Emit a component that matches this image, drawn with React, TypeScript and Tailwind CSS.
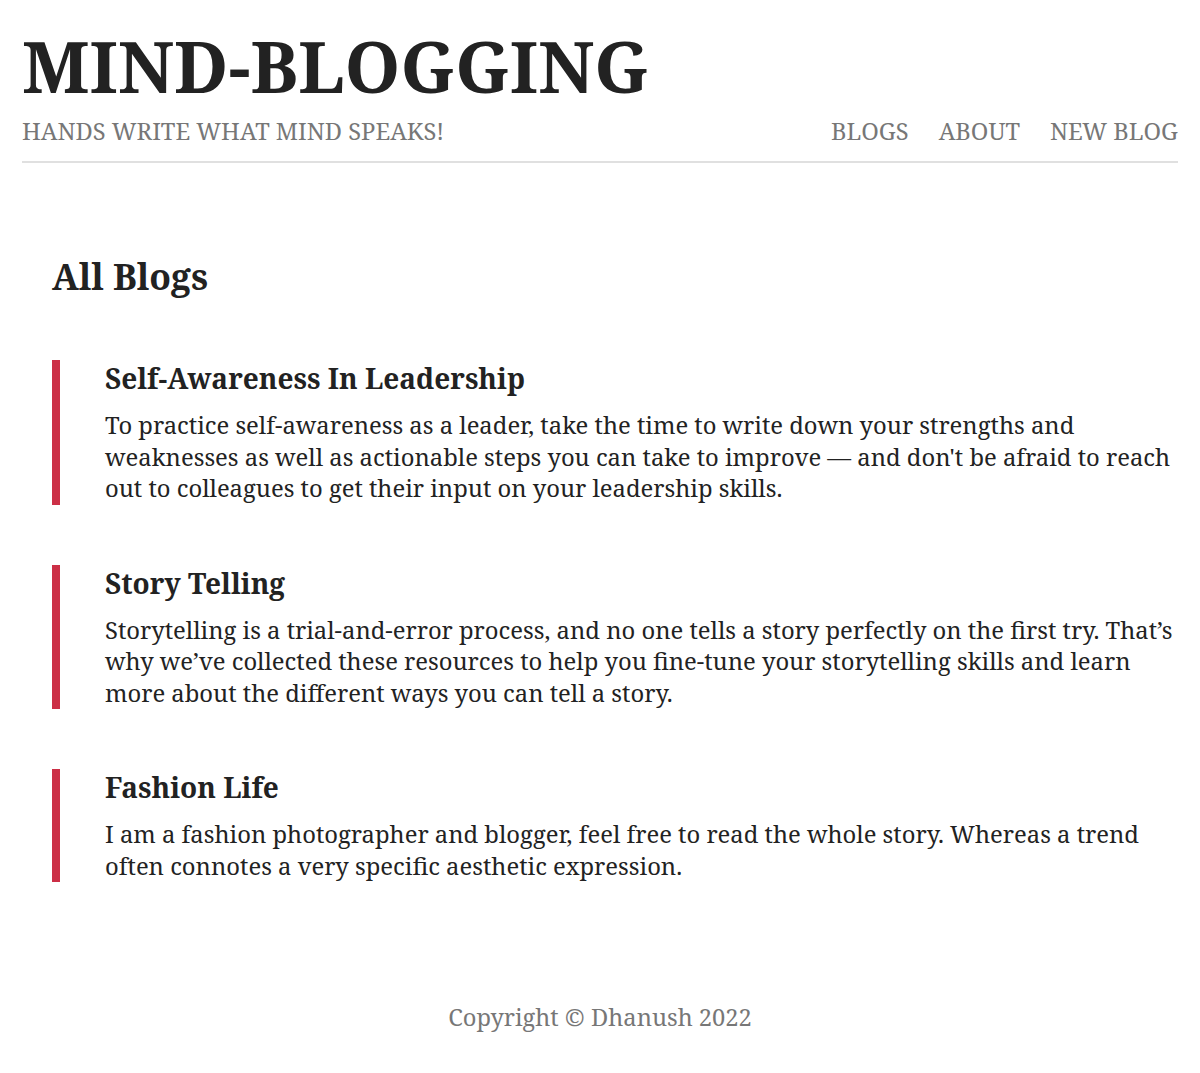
import React from "react";

const blogs = [
  {
    title: "Self-Awareness In Leadership",
    body: "To practice self-awareness as a leader, take the time to write down your strengths and weaknesses as well as actionable steps you can take to improve — and don't be afraid to reach out to colleagues to get their input on your leadership skills.",
  },
  {
    title: "Story Telling",
    body: "Storytelling is a trial-and-error process, and no one tells a story perfectly on the first try. That’s why we’ve collected these resources to help you fine-tune your storytelling skills and learn more about the different ways you can tell a story.",
  },
  {
    title: "Fashion Life",
    body: "I am a fashion photographer and blogger, feel free to read the whole story. Whereas a trend often connotes a very specific aesthetic expression.",
  },
];

export default function App() {
  return (
    <div
      className="min-h-[1073px] bg-white text-[#222]"
      style={{ fontFamily: '"Noto Serif", "DejaVu Serif", serif' }}
    >
      <header className="mx-[22px] border-b-2 border-[#e0e0e0] pt-[26px] pb-[14px]">
        <h1 className="text-[71px] font-bold leading-[80px] text-[#222]">MIND-BLOGGING</h1>
        <div className="mt-[9px] flex items-center justify-between text-[23.7px] leading-[32px] text-[#777]">
          <span>HANDS WRITE WHAT MIND SPEAKS!</span>
          <nav className="flex gap-[30px]">
            <a>BLOGS</a>
            <a>ABOUT</a>
            <a>NEW BLOG</a>
          </nav>
        </div>
      </header>
      <main className="pl-[52px] pr-[22px] pt-[91px]">
        <h2 className="text-[35.5px] font-bold leading-[44px]">All Blogs</h2>
        <div className="mt-[62px] flex flex-col gap-[60px]">
          {blogs.map((b) => (
            <div key={b.title} className="border-l-[8px] border-[#cc2f46] pl-[45px]">
              <h3 className="text-[28px] font-bold leading-[36px]">{b.title}</h3>
              <p className="mt-[14px] text-[23.8px] leading-[31.5px] text-[#222]">{b.body}</p>
            </div>
          ))}
        </div>
      </main>
      <footer className="mt-[119px] text-center text-[23.7px] leading-[32px] text-[#777]">
        Copyright © Dhanush 2022
      </footer>
    </div>
  );
}
